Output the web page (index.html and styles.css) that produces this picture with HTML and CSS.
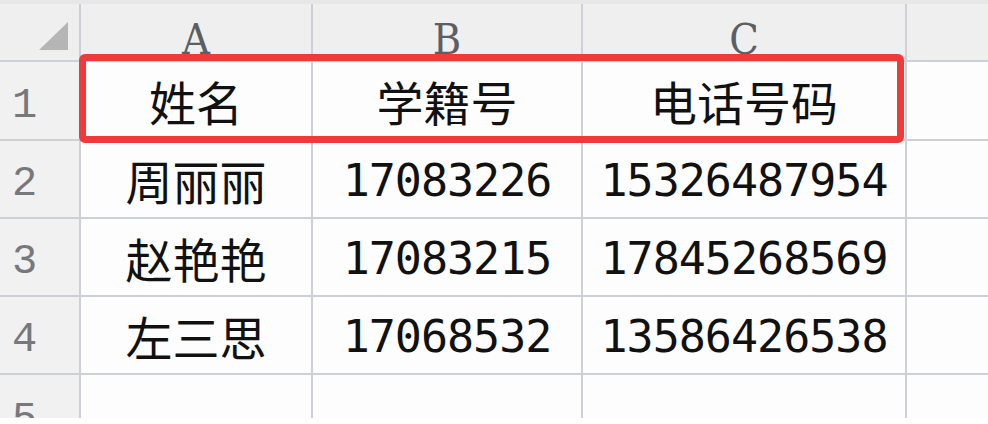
FILE: index.html
```html
<!DOCTYPE html>
<html lang="zh">
<head>
<meta charset="utf-8">
<title>Sheet</title>
<link rel="stylesheet" href="styles.css">
</head>
<body>
<div class="app">
  <div class="topstrip"></div>
  <div class="sheet-wrap">
    <div class="sheet">
      <div class="corner"><span class="tri"></span></div>
      <div class="colhead">A</div>
      <div class="colhead">B</div>
      <div class="colhead">C</div>
      <div class="colhead"></div>

      <div class="rowhead">1</div>
      <div class="cell zh">姓名</div>
      <div class="cell zh">学籍号</div>
      <div class="cell zh">电话号码</div>
      <div class="cell"></div>

      <div class="rowhead">2</div>
      <div class="cell zh">周丽丽</div>
      <div class="cell num">17083226</div>
      <div class="cell num">15326487954</div>
      <div class="cell"></div>

      <div class="rowhead">3</div>
      <div class="cell zh">赵艳艳</div>
      <div class="cell num">17083215</div>
      <div class="cell num">17845268569</div>
      <div class="cell"></div>

      <div class="rowhead">4</div>
      <div class="cell zh">左三思</div>
      <div class="cell num">17068532</div>
      <div class="cell num">13586426538</div>
      <div class="cell"></div>

      <div class="rowhead cut">5</div>
      <div class="cell"></div>
      <div class="cell"></div>
      <div class="cell"></div>
      <div class="cell"></div>
    </div>
    <div class="highlight"></div>
  </div>
  <div class="bottomstrip"></div>
</div>
</body>
</html>
```

FILE: styles.css
```css
* { box-sizing: border-box; }
html, body { margin: 0; padding: 0; }
body {
  width: 988px;
  height: 424px;
  overflow: hidden;
  background: #ffffff;
  font-family: "Noto Sans CJK SC", "Noto Sans", sans-serif;
}
.app {
  display: flex;
  flex-direction: column;
  width: 988px;
  height: 424px;
}
.topstrip {
  height: 4px;
  background: #e7e7e8;
}
.sheet-wrap {
  position: relative;
}
.sheet {
  display: grid;
  grid-template-columns: 79px 230px 268px 322px 1fr;
  grid-template-rows: 56px 77px 76px 76px 76px 43px;
  gap: 2px;
  background: #cdd0d4;
}
.corner {
  background: #efeff0;
  position: relative;
}
.tri {
  position: absolute;
  left: 39px;
  top: 18px;
  width: 0;
  height: 0;
  border-left: 29px solid transparent;
  border-bottom: 28px solid #b5b5b6;
}
.colhead {
  background: #efeff0;
  display: flex;
  align-items: center;
  justify-content: center;
  padding-top: 14px;
  font-family: "DejaVu Serif Condensed", "DejaVu Serif", serif;
  font-stretch: condensed;
  font-size: 43px;
  line-height: 1;
  color: #5b5e63;
}
.rowhead {
  background: #f1f1f2;
  display: flex;
  align-items: center;
  padding-left: 12px;
  padding-top: 10px;
  font-family: "Liberation Mono", monospace;
  font-size: 42px;
  line-height: 1;
  color: #76787c;
  overflow: hidden;
}
.rowhead.cut {
  align-items: flex-start;
  padding-top: 24px;
}
.cell {
  background: #fdfdfd;
  display: flex;
  align-items: center;
  justify-content: center;
  line-height: 1;
  color: #111111;
}
.zh {
  font-family: "Noto Sans CJK SC", sans-serif;
  font-size: 47px;
  font-weight: 400;
}
.num {
  font-family: "DejaVu Sans Mono", monospace;
  font-size: 45px;
  letter-spacing: -1px;
  padding-top: 2px;
}
.highlight {
  position: absolute;
  left: 79px;
  top: 50px;
  width: 825px;
  height: 89px;
  border: 7px solid #f0393b;
  border-radius: 6px;
  pointer-events: none;
}
.bottomstrip {
  flex: 1;
  background: #ffffff;
}
```
